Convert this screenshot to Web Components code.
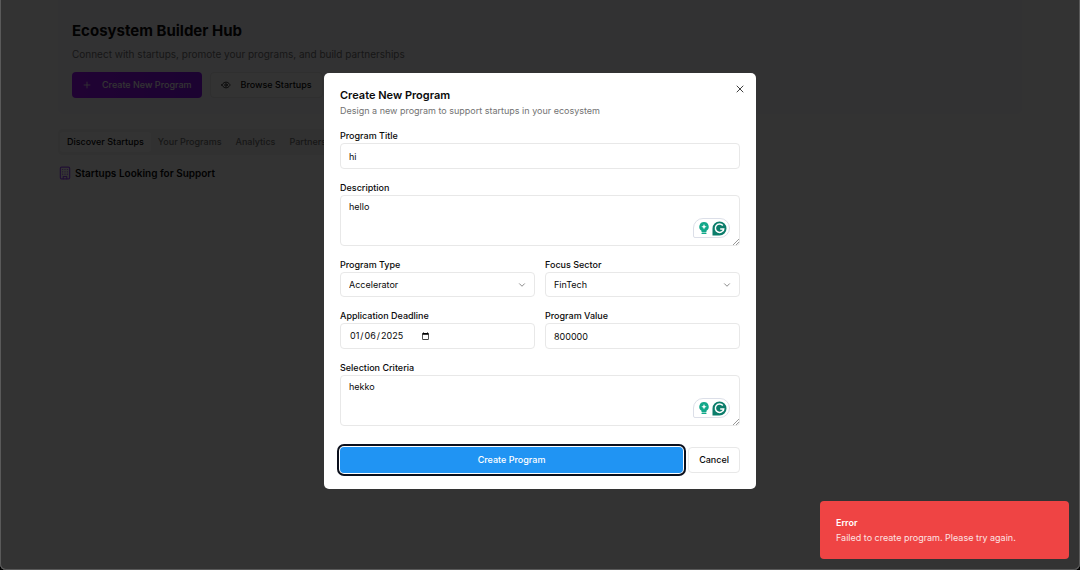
<!DOCTYPE html>
<html lang="en">
<head>
<meta charset="utf-8">
<meta name="viewport" content="width=device-width, initial-scale=1">
<title>Ecosystem Builder Hub</title>
<style>
  html, body { margin: 0; height: 100%; background: #000; }
  body { font-family: Inter, "Liberation Sans", sans-serif; font-size: 9px; line-height: 12px; color: #0a0a0a; overflow: hidden; }
</style>
</head>
<body>
<app-window>
  <hub-page></hub-page>
  <modal-overlay slot="overlay">
    <program-dialog></program-dialog>
  </modal-overlay>
  <toast-message slot="toast" heading="Error">Failed to create program. Please try again.</toast-message>
</app-window>

<script>
const define = (name, html, setup) => {
  const template = document.createElement('template');
  template.innerHTML = '<style>*{box-sizing:border-box}button,input,select,textarea{font:inherit;color:inherit;margin:0}</style>' + html;
  customElements.define(name, class extends HTMLElement {
    connectedCallback() {
      if (this.shadowRoot) return;
      this.attachShadow({ mode: 'open' }).append(template.content.cloneNode(true));
      if (setup) setup(this, this.shadowRoot);
    }
  });
};

const ICONS = {
  plus: '<path d="M5 12h14M12 5v14"/>',
  eye: '<path d="M2 12s3.500-7 10-7 10 7 10 7-3.500 7-10 7-10-7-10-7Z"/><circle cx="12" cy="12" r="3"/>',
  building: '<rect x="4" y="2" width="16" height="20" rx="2"/><path d="M9 22v-4h6v4M8 6h.01M16 6h.01M12 6h.01M12 10h.01M12 14h.01M16 10h.01M16 14h.01M8 10h.01M8 14h.01"/>',
  close: '<path d="M18 6 6 18M6 6l12 12"/>',
  chevron: '<path d="m6 9 6 6 6-6"/>'
};

define('line-icon', `
  <style>
    :host { display: inline-flex; flex: none; width: var(--size, 10px); height: var(--size, 10px); }
    svg { width: 100%; height: 100%; fill: none; stroke: currentColor; stroke-width: 2; stroke-linecap: round; stroke-linejoin: round; }
  </style>
  <svg viewBox="0 0 24 24" aria-hidden="true"></svg>`,
  (el, root) => { root.querySelector('svg').innerHTML = ICONS[el.getAttribute('name')]; });

define('app-window', `
  <style>
    :host { display: block; position: relative; height: 100vh; box-sizing: border-box; overflow: hidden;
            background: #fff; border-radius: 0 0 6px 6px; }
    .edge { position: absolute; inset: 0; border: solid #5a5a5a; border-width: 0 1px 1px; border-radius: 0 0 6px 6px; pointer-events: none; }
    .toast { position: absolute; right: 11px; bottom: 11px; }
  </style>
  <slot></slot>
  <slot name="overlay"></slot>
  <div class="edge"></div>
  <div class="toast"><slot name="toast"></slot></div>`);

define('action-button', `
  <style>
    :host { display: block; }
    button { display: flex; align-items: center; justify-content: center; width: 100%; height: 26px; padding: 0 10px;
             border: 1px solid #e8e8e8; border-radius: 4px; background: #fff; font-weight: 500; cursor: pointer; white-space: nowrap; }
    ::slotted(line-icon) { margin-right: 10px; }
    :host([variant=purple]) button { border: 0; background: linear-gradient(90deg, #a010ff, #8a0ff5); color: #fff; }
    :host([variant=primary]) button { border: 0; background: #2094f3; color: #fff;
             box-shadow: 0 0 0 1px #fff, 0 0 0 3px #0a0f1c; }
  </style>
  <button type="button"><slot></slot></button>`);

define('hub-page', `
  <style>
    :host { display: block; padding: 0 58px; }
    header { padding: 21px 14px 16px; background: #faf9ff; border-radius: 0 0 5px 5px; }
    h1 { margin: 0; font-size: 15px; line-height: 20px; font-weight: 700; }
    p { margin: 5px 0 10px; font-size: 10px; line-height: 16px; color: #737373; }
    .actions { display: flex; gap: 8px; }
    nav { display: inline-flex; align-items: center; margin-top: 15px; height: 26px; padding: 0 2px;
          border-radius: 4px; background: #f5f5f5; }
    nav button { height: 20px; padding: 0 7px; border: 0; border-radius: 3px; background: none; color: #737373; font-weight: 500; }
    nav button[aria-selected=true] { background: #fff; color: #0a0a0a; }
    h2 { display: flex; align-items: center; gap: 3px; margin: 11px 0 0; font-size: 10px; line-height: 14px; font-weight: 600; }
    h2 line-icon { --size: 14px; color: #a04dff; }
  </style>
  <header>
    <h1>Ecosystem Builder Hub</h1>
    <p>Connect with startups, promote your programs, and build partnerships</p>
    <div class="actions">
      <action-button variant="purple"><line-icon name="plus"></line-icon>Create New Program</action-button>
      <action-button><line-icon name="eye"></line-icon>Browse Startups</action-button>
    </div>
  </header>
  <nav role="tablist">
    <button role="tab" aria-selected="true">Discover Startups</button>
    <button role="tab" aria-selected="false">Your Programs</button>
    <button role="tab" aria-selected="false">Analytics</button>
    <button role="tab" aria-selected="false">Partners</button>
  </nav>
  <h2><line-icon name="building"></line-icon>Startups Looking for Support</h2>`);

define('modal-overlay', `
  <style>
    :host { position: absolute; inset: 0; display: flex; align-items: center; justify-content: center;
            padding-bottom: 8px; background: rgba(0, 0, 0, .8); }
  </style>
  <slot></slot>`);

define('writing-badge', `
  <style>
    :host { display: flex; align-items: center; gap: 1px; height: 20px; padding: 0 2px 0 3px; box-sizing: border-box;
            border: 1px solid #dcdfe8; border-radius: 10px 10px 10px 2px; background: #fff; }
    svg { display: block; }
  </style>
  <svg width="14" height="16" viewBox="0 0 14 16" aria-hidden="true">
    <path fill="#12a88a" d="M7 2a4.700 4.700 0 0 0-2.500 8.700V12h5v-1.300A4.700 4.700 0 0 0 7 2Z"/>
    <path fill="#fff" d="M7 4l.8 1.900 1.900.8-1.900.8L7 9.400l-.8-1.900-1.900-.8 1.900-.8Z"/>
    <rect x="4.500" y="12.600" width="5" height="1.500" rx=".7" fill="#12a88a"/>
  </svg>
  <svg width="15" height="15" viewBox="0 0 15 15" aria-hidden="true">
    <path fill="#0c7d6b" d="M7.500.5a7 7 0 1 1 0 14H.5v-7a7 7 0 0 1 7-7Z"/>
    <path fill="none" stroke="#fff" stroke-width="1.500" d="M10.800 4.500A4.200 4.200 0 1 0 11.700 7.900H8.200M11.700 7.900l-.5 2.200"/>
  </svg>`);

define('form-field', `
  <style>
    :host { display: block; min-width: 0; }
    label { display: block; margin-bottom: 1px; line-height: 12px; font-weight: 500; }
    .control { position: relative; display: grid; align-items: center; }
    input, textarea, select { display: block; width: 100%; padding: 0 8px; border: 1px solid #e8e8e8; border-radius: 4px;
             background: #fff; outline: 0; appearance: none; }
    input { height: 26px; }
    select { height: 25px; }
    textarea { height: 51px; padding: 5px 8px; resize: vertical; }
    textarea::-webkit-resizer { background: linear-gradient(135deg, transparent 77%, #999 77% 81%, transparent 81% 88%, #999 88% 92%, transparent 92%); }
    line-icon { position: absolute; right: 8px; color: #737373; pointer-events: none; }
    ::slotted(writing-badge) { position: absolute; right: 10px; bottom: 8px; }
    input[type=date]::-webkit-datetime-edit { flex: none; padding: 0; }
    input[type=date]::-webkit-calendar-picker-indicator { width: 9px; height: 9px; padding: 0; margin-left: 0; }
  </style>
  <label for="control"></label>
  <div class="control"><slot></slot></div>`,
  (el, root) => {
    const kind = el.getAttribute('kind') || 'text';
    const value = el.getAttribute('value');
    const tag = kind === 'textarea' || kind === 'select' ? kind : 'input';
    const control = document.createElement(tag);
    const box = root.querySelector('.control');
    control.id = 'control';
    root.querySelector('label').textContent = el.getAttribute('label');
    if (tag === 'select') control.add(new Option(value, value));
    else if (tag === 'textarea') control.textContent = value;
    else { control.type = kind; control.setAttribute('value', value); }
    box.prepend(control);
    if (tag === 'select') {
      const icon = document.createElement('line-icon');
      icon.setAttribute('name', 'chevron');
      box.append(icon);
    }
  });

define('program-dialog', `
  <style>
    :host { display: block; position: relative; width: 40%; min-width: 320px; box-sizing: border-box; padding: 16px;
            background: #fff; border-radius: 5px; }
    h2 { margin: 0; font-size: 11px; line-height: 12px; font-weight: 600; }
    p { margin: 3px 0 12px; line-height: 14px; color: #737373; }
    form { display: grid; gap: 13px; }
    .pair { display: grid; grid-template-columns: 1fr 1fr; gap: 10px; }
    .footer { display: flex; gap: 5px; margin-top: 8px; }
    .footer .main { flex: 1; }
    .close { position: absolute; top: 10px; right: 10px; display: flex; padding: 0; border: 0; background: none; color: #404040; }
    .close line-icon { --size: 12px; }
  </style>
  <h2>Create New Program</h2>
  <p>Design a new program to support startups in your ecosystem</p>
  <form>
    <form-field label="Program Title" value="hi"></form-field>
    <form-field label="Description" kind="textarea" value="hello"><writing-badge></writing-badge></form-field>
    <div class="pair">
      <form-field label="Program Type" kind="select" value="Accelerator"></form-field>
      <form-field label="Focus Sector" kind="select" value="FinTech"></form-field>
    </div>
    <div class="pair">
      <form-field label="Application Deadline" kind="date" value="2025-01-06"></form-field>
      <form-field label="Program Value" value="800000"></form-field>
    </div>
    <form-field label="Selection Criteria" kind="textarea" value="hekko"><writing-badge></writing-badge></form-field>
    <div class="footer">
      <action-button class="main" variant="primary">Create Program</action-button>
      <action-button>Cancel</action-button>
    </div>
  </form>
  <button class="close" type="button" aria-label="Close"><line-icon name="close"></line-icon></button>`);

define('toast-message', `
  <style>
    :host { display: block; width: 249px; box-sizing: border-box; padding: 15px 16px; border-radius: 4px;
            background: #ef4444; color: #fff; }
    strong { display: block; margin-bottom: 2px; line-height: 13px; font-weight: 600; }
    div { line-height: 13px; opacity: .85; }
  </style>
  <strong></strong>
  <div><slot></slot></div>`,
  (el, root) => { root.querySelector('strong').textContent = el.getAttribute('heading'); });
</script>
</body>
</html>
